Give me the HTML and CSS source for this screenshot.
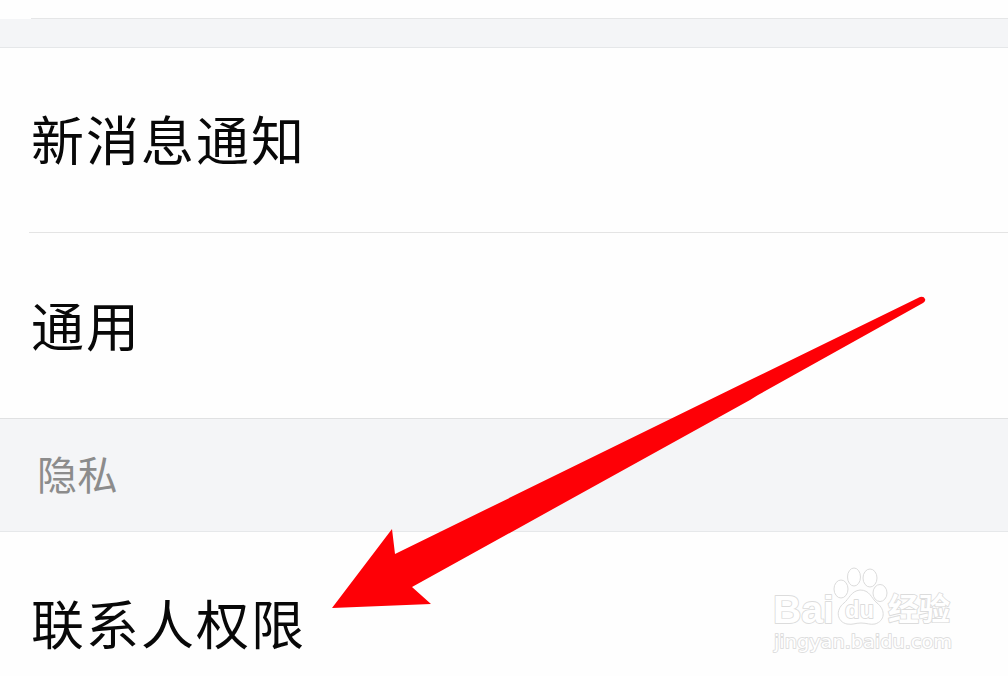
FILE: index.html
```
<!DOCTYPE html>
<html lang="zh-CN">

<head>
    <meta charset="UTF-8">
    <meta name="viewport" content="width=device-width, initial-scale=1.0">
    <title>设置</title>
    <link rel="stylesheet" href="styles.css">
</head>

<body>

    <main class="settings">
        <div class="previous-row"></div>
        <div class="separator"></div>

        <div class="row row-line">新消息通知</div>
        <div class="row row-general">通用</div>

        <h2 class="section-title">隐私</h2>

        <div class="row row-contacts">联系人权限</div>
    </main>

    <!-- Red arrow -->
    <svg class="arrow" viewBox="0 0 1008 676" aria-hidden="true">
        <path d="M332 608 L392 529 L395 554 L750 380 L920 297 Q924 296 925 299 Q926 301 923 303 L758 395 L750 400 L412 587 L431 604 Z" />
    </svg>

    <!-- Watermark -->
    <svg class="watermark" viewBox="0 0 210 110" role="img" aria-label="Baidu 经验">
        <g class="paw">
            <ellipse cx="81" cy="33" rx="7" ry="9" />
            <ellipse cx="94" cy="21" rx="6.5" ry="9" />
            <ellipse cx="110" cy="22" rx="7" ry="9" />
            <ellipse cx="120" cy="37" rx="7" ry="8.5" />
            <path d="M100 34 C91 35 89 43 84 47 C75 54 77 66 87 68 C93 69 95 67 101 67 C107 67 110 69 115 68 C125 65 126 54 117 47 C111 42 110 34 100 34 Z" />
        </g>
        <text class="brand" x="13" y="67" textLength="61" lengthAdjust="spacingAndGlyphs">Bai</text>
        <text class="brand-du" x="85" y="62" textLength="29" lengthAdjust="spacingAndGlyphs">du</text>
        <text class="brand-cn" x="128" y="64" textLength="62" lengthAdjust="spacingAndGlyphs">经验</text>
        <text class="site" x="14" y="91.5" textLength="178" lengthAdjust="spacingAndGlyphs">jingyan.baidu.com</text>
    </svg>

</body>
</html>
```
FILE: styles.css
```
* {
    box-sizing: border-box;
}

body {
    position: relative;
    height: 676px;
    margin: 0;
    overflow: hidden;
    background-color: #fefefe;
    color: #080808;
    font-family: "Noto Sans CJK SC", sans-serif;
}

.previous-row {
    height: 19px;
    margin-left: 31px;
    border-bottom: 1px solid #e5e6e7;
}

.separator {
    height: 29px;
    background-color: #f4f5f7;
    border-bottom: 1px solid #e5e7e9;
}

.row {
    display: flex;
    align-items: center;
    height: 185px;
    padding-left: 31px;
    padding-bottom: 5px;
    font-size: 53px;
    line-height: 80px;
    letter-spacing: 2px;
}

.row-line {
    margin-left: 29px;
    padding-left: 2px;
    border-bottom: 1px solid #e4e4e4;
}

.row-general {
    padding-bottom: 4px;
}

.row-contacts {
    height: 144px;
    align-items: flex-start;
    padding-top: 50px;
    padding-bottom: 0;
}

.section-title {
    display: flex;
    align-items: center;
    height: 114px;
    margin: 0;
    padding-bottom: 5px;
    padding-left: 37px;
    background-color: #f4f5f7;
    border-top: 1px solid #e0e1e2;
    border-bottom: 1px solid #e6e8ea;
    color: #8c8c8c;
    font-size: 40px;
    font-weight: 400;
    letter-spacing: 0.5px;
}

.arrow {
    position: absolute;
    top: 0;
    left: 0;
    width: 1008px;
    height: 676px;
    fill: #fe0006;
}

.watermark {
    position: absolute;
    right: 38px;
    bottom: 10px;
    width: 210px;
    height: 110px;
    fill: #fff;
    stroke: #dcdcdc;
    stroke-width: 1;
    font-family: "Liberation Sans", sans-serif;
    font-weight: bold;
}

.watermark text {
    stroke-width: 1.8;
    stroke-linejoin: round;
    paint-order: stroke;
}

.brand {
    font-size: 39px;
}

.brand-du {
    font-size: 24px;
}

.brand-cn {
    font-family: "Noto Sans CJK SC", sans-serif;
    font-size: 31px;
}

.watermark .site {
    font-family: "DejaVu Sans", sans-serif;
    font-size: 18px;
    font-weight: normal;
    stroke: #dedede;
    stroke-width: 1.8;
}
```
